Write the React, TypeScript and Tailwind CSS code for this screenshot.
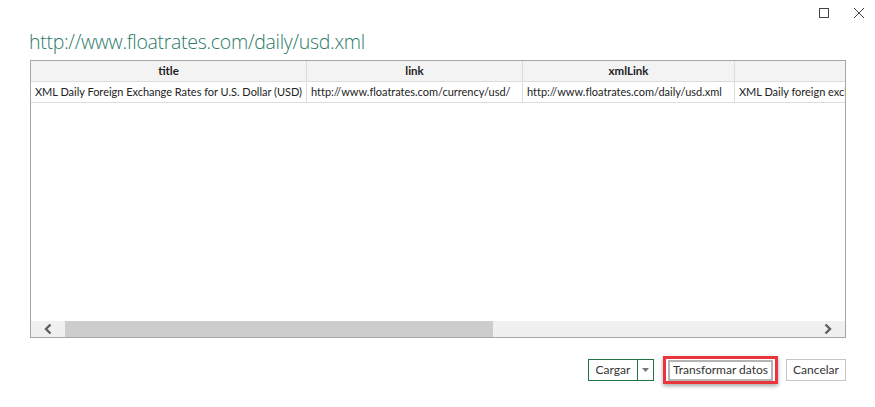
import React from 'react';

const font = { fontFamily: 'Lato, "Open Sans", sans-serif' };

const columns = [
  { name: 'title', width: 276, value: 'XML Daily Foreign Exchange Rates for U.S. Dollar (USD)' },
  { name: 'link', width: 216, value: 'http://www.floatrates.com/currency/usd/' },
  { name: 'xmlLink', width: 212, value: 'http://www.floatrates.com/daily/usd.xml' },
  { name: 'description', width: 280, value: 'XML Daily foreign exchange rates for U.S. Dollar (USD)' },
];

const Chevron: React.FC<{ dir: 'left' | 'right' }> = ({ dir }) => (
  <svg width="10" height="12" viewBox="0 0 10 12">
    <path
      d={dir === 'left' ? 'M7.5 1.5 L3 6 L7.5 10.5' : 'M2.5 1.5 L7 6 L2.5 10.5'}
      fill="none"
      stroke="#5f5f5f"
      strokeWidth="2.4"
    />
  </svg>
);

const App: React.FC = () => {
  return (
    <div className="w-[875px] h-[407px] bg-white flex flex-col overflow-hidden" style={font}>
      {/* window controls */}
      <div className="h-[28px] flex justify-end items-start pt-[6px] pr-[9px] gap-[22px]">
        <svg width="12" height="12" viewBox="0 0 12 12" className="mt-[1px]">
          <rect x="1.5" y="1.5" width="9" height="9" fill="none" stroke="#444" strokeWidth="1" />
        </svg>
        <svg width="14" height="14" viewBox="0 0 14 14">
          <path d="M2 2 L12 12 M12 2 L2 12" stroke="#444" strokeWidth="1" />
        </svg>
      </div>

      <div
        className="pl-[29px] h-[32px] text-[19.5px] font-light leading-[28px] text-[#2b7a68] tracking-[-0.3px]"
        style={{ fontFamily: '"Open Sans", sans-serif' }}
      >
        http://www.floatrates.com/daily/usd.xml
      </div>

      {/* table frame */}
      <div className="ml-[30px] w-[816px] h-[278px] border border-[#a6a6a6] flex flex-col">
        <div className="flex-1 overflow-hidden">
          <div className="flex w-max bg-[#f3f3f3] border-b border-[#dcdcdc] h-[21px]">
            {columns.map((c) => (
              <div
                key={c.name}
                className="border-r border-[#dcdcdc] text-[11.5px] font-bold text-[#222] text-center leading-[20px]"
                style={{ width: c.width }}
              >
                {c.name}
              </div>
            ))}
          </div>
          <div className="flex w-max border-b border-[#dcdcdc] h-[21px]">
            {columns.map((c) => (
              <div
                key={c.name}
                className="border-r border-[#dcdcdc] text-[11px] tracking-[-0.02px] text-[#222] px-[4px] leading-[20px] whitespace-nowrap overflow-hidden"
                style={{ width: c.width }}
              >
                {c.value}
              </div>
            ))}
          </div>
        </div>
        {/* horizontal scrollbar */}
        <div className="h-[16px] flex bg-[#f0f0f0]">
          <div className="w-[34px] flex items-center justify-center">
            <Chevron dir="left" />
          </div>
          <div className="w-[428px] bg-[#cdcdcd]" />
          <div className="flex-1" />
          <div className="w-[34px] flex items-center justify-center">
            <Chevron dir="right" />
          </div>
        </div>
      </div>

      {/* buttons */}
      <div className="flex justify-end items-center pr-[29px] pt-[18px] text-[12px] text-[#333]">
        <div className="flex h-[22px] border border-[#217346]">
          <div className="w-[49px] flex items-center justify-center border-r border-[#217346] leading-none">
            Cargar
          </div>
          <div className="w-[15px] flex items-center justify-center">
            <svg width="7" height="4" viewBox="0 0 7 4">
              <path d="M0 0 L7 0 L3.5 4 Z" fill="#777" />
            </svg>
          </div>
        </div>
        <div className="ml-[9px] w-[115px] h-[28px] border-[3px] border-[#e8363c] flex items-center justify-center shadow-[0_2px_4px_rgba(0,0,0,0.35)]">
          <div className="w-[105px] h-[21px] border-2 border-[#b4b4b4] bg-white flex items-center justify-center leading-none whitespace-nowrap">
            Transformar datos
          </div>
        </div>
        <div className="ml-[8px] w-[60px] h-[22px] border border-[#c6c6c6] flex items-center justify-center leading-none">
          Cancelar
        </div>
      </div>
    </div>
  );
};

export default App;
